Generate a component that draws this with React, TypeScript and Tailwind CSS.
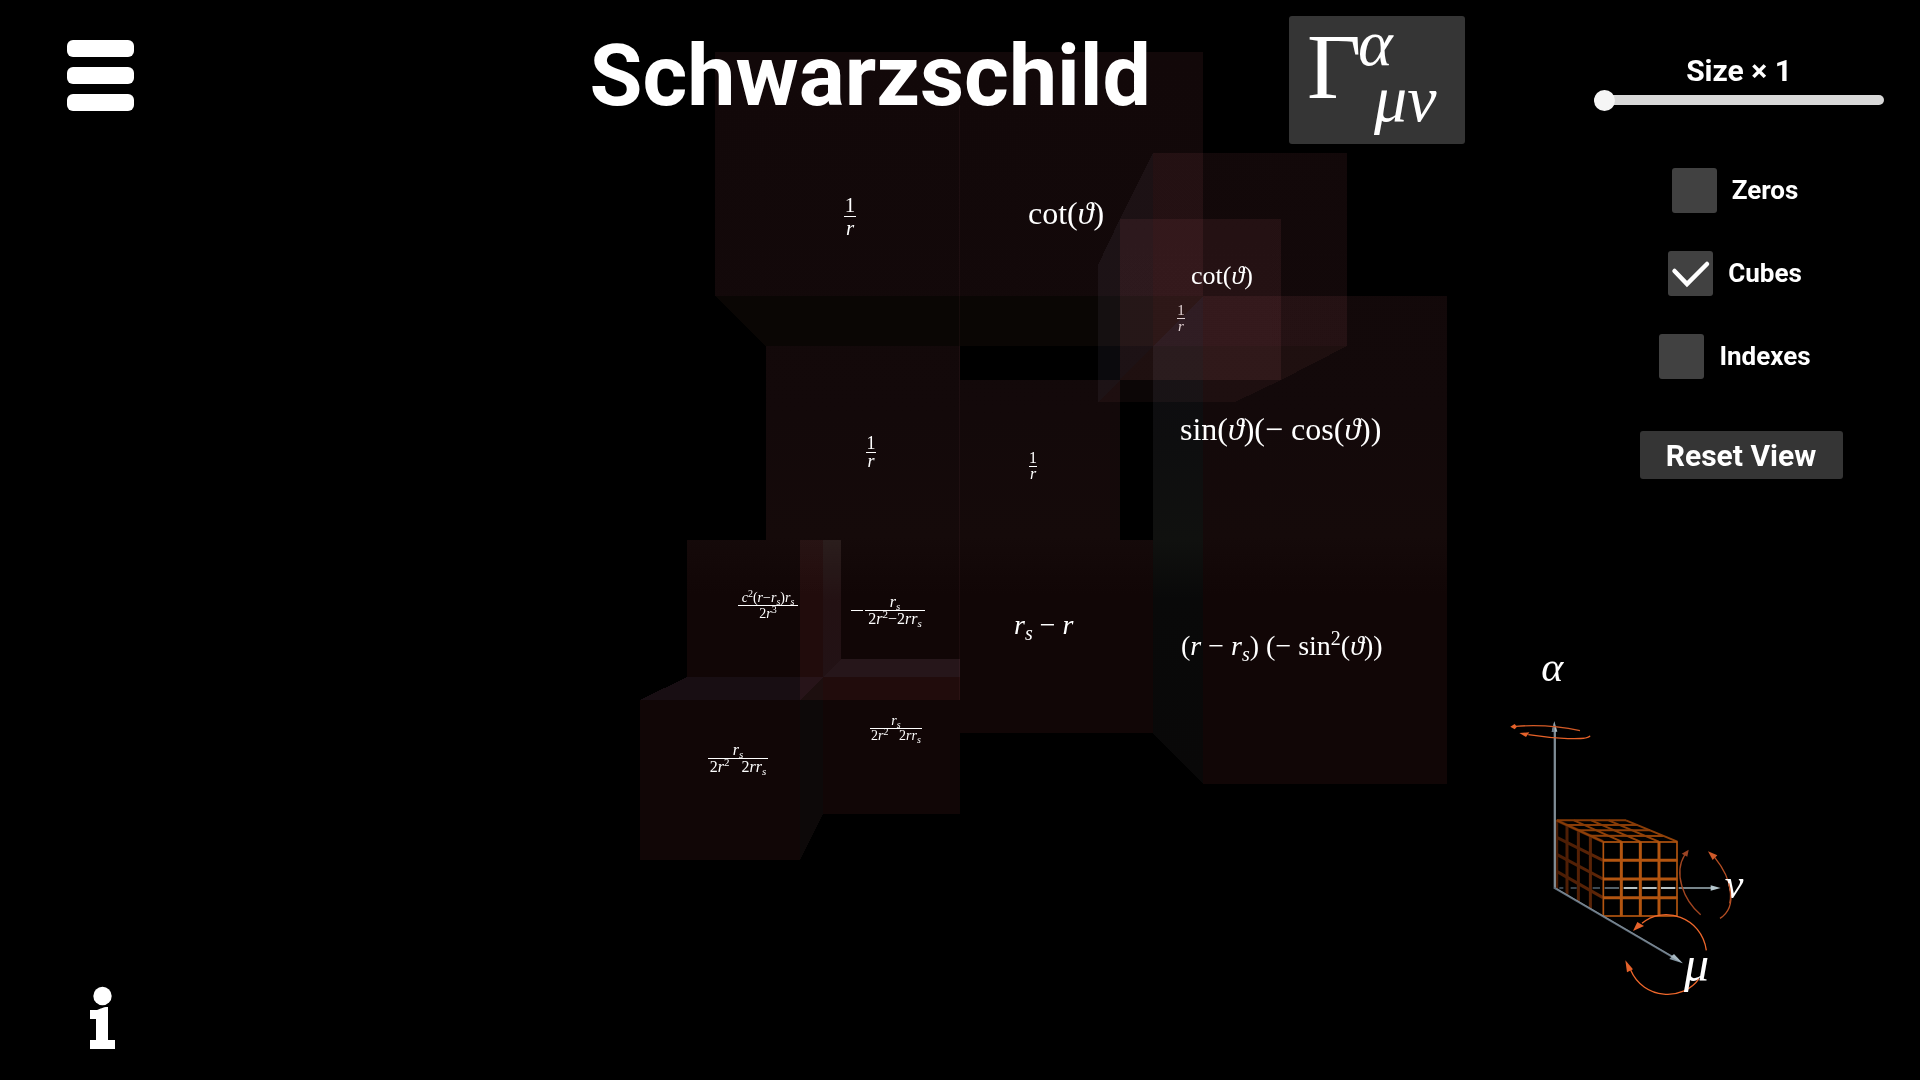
import { useState } from "react";
import type { ReactNode } from "react";

const SERIF = "font-[Liberation_Serif,DejaVu_Serif,serif]";

/* ---------- cube scene ---------- */

const LAYER_FACES = [
  "715,52 959,52 959,296 715,296",
  "959,52 1203,52 1203,296 959,296",
  "1203,296 1447,296 1447,540 1203,540",
  "1203,540 1447,540 1447,784 1203,784",
  "766,346 960,346 960,540 766,540",
  "1153,153 1347,153 1347,346 1153,346",
  "960,540 1153,540 1153,733 960,733",
  "1120,219 1281,219 1281,380 1120,380",
  "960,380 1120,380 1120,540 960,540",
  "800,540 960,540 960,700 800,700",
  "640,700 800,700 800,860 640,860",
  "687,540 823,540 823,677 687,677",
  "823,677 960,677 960,814 823,814",
];

const SHADED_FACES: { points: string; fill: string }[] = [
  { points: "715,296 1203,296 1153,346 766,346", fill: "#0a0604" },
  { points: "1203,296 1203,784 1153,733 1153,346", fill: "url(#wall)" },
  { points: "1153,153 1153,346 1120,380 1120,219", fill: "#0b090b" },
  { points: "1153,346 1347,346 1281,380 1120,380", fill: "#0d0706" },
  { points: "1120,219 1120,380 1098,402 1098,265", fill: "#0b0a0d" },
  { points: "1120,380 1281,380 1235,402 1098,402", fill: "#0c0606" },
  { points: "640,700 800,700 823,677 687,677", fill: "#180e13" },
  { points: "800,700 823,677 823,814 800,860", fill: "#0d0909" },
  { points: "823,677 960,677 960,659 841,659", fill: "#171014" },
  { points: "823,540 841,540 841,659 823,677", fill: "url(#inner)" },
];

function Sub({ children, size }: { children: string; size: number }) {
  return (
    <tspan baselineShift={-Math.round(size * 0.2)} fontSize={Math.round(size * 0.7)}>
      {children}
    </tspan>
  );
}

function Sup({ children, size }: { children: string; size: number }) {
  return (
    <tspan baselineShift={Math.round(size * 0.36)} fontSize={Math.round(size * 0.7)}>
      {children}
    </tspan>
  );
}

function It({ children }: { children: ReactNode }) {
  return <tspan fontStyle="italic">{children}</tspan>;
}

function Fraction(props: {
  x: number;
  y: number;
  half: number;
  size: number;
  up: number;
  down: number;
  top: ReactNode;
  bottom: ReactNode;
  color?: string;
}) {
  const { x, y, half, size, up, down, top, bottom, color = "#fff" } = props;
  return (
    <g fill={color} fontSize={size} textAnchor="middle">
      <text x={x} y={y - up}>{top}</text>
      <rect x={x - half} y={y} width={half * 2} height="1" />
      <text x={x} y={y + down}>{bottom}</text>
    </g>
  );
}

function Scene() {
  const rs = (size: number) => (
    <It>
      r<Sub size={size}>s</Sub>
    </It>
  );
  const oneOverR = { top: "1", bottom: <It>r</It> };
  return (
    <svg
      className={`absolute inset-0 h-full w-full ${SERIF}`}
      viewBox="0 0 1920 1080"
      role="img"
      aria-label="Christoffel symbol cubes"
    >
      <defs>
        <linearGradient id="face" gradientUnits="userSpaceOnUse" x1="0" y1="52" x2="0" y2="860">
          <stop offset="0" stopColor="#120809" />
          <stop offset="0.45" stopColor="#13090a" />
          <stop offset="0.6" stopColor="#150a0a" />
          <stop offset="0.67" stopColor="#110606" />
          <stop offset="1" stopColor="#110606" />
        </linearGradient>
        <linearGradient id="wall" gradientUnits="userSpaceOnUse" x1="0" y1="296" x2="0" y2="784">
          <stop offset="0" stopColor="#0d0c11" />
          <stop offset="0.3" stopColor="#0e0e0f" />
          <stop offset="0.5" stopColor="#10110f" />
          <stop offset="0.62" stopColor="#090909" />
          <stop offset="1" stopColor="#090808" />
        </linearGradient>
        <linearGradient id="inner" gradientUnits="userSpaceOnUse" x1="0" y1="540" x2="0" y2="677">
          <stop offset="0" stopColor="#181514" />
          <stop offset="0.45" stopColor="#130b0d" />
          <stop offset="1" stopColor="#120c0f" />
        </linearGradient>
      </defs>

      <g className="isolate" shapeRendering="crispEdges">
        {LAYER_FACES.map((points) => (
          <polygon key={points} points={points} fill="url(#face)" className="mix-blend-screen" />
        ))}
        {SHADED_FACES.map((f) => (
          <polygon key={f.points} points={f.points} fill={f.fill} className="mix-blend-screen" />
        ))}
        <rect x="959" y="105" width="1" height="595" fill="#0c0607" className="mix-blend-screen" />
      </g>

      <Fraction x={850} y={216} half={6} size={21} up={4} down={19} {...oneOverR} />
      <Fraction x={871} y={452} half={5} size={18} up={3} down={15} {...oneOverR} />
      <Fraction x={1033} y={466} half={4} size={16} up={3} down={13} {...oneOverR} />
      <Fraction x={1181} y={318} half={4} size={15} up={3} down={13} color="#e0d0d2" {...oneOverR} />

      <g fill="#fff">
        <text x="1028" y="224" fontSize="32">cot(<It>ϑ</It>)</text>
        <text x="1191" y="284" fontSize="26">cot(<It>ϑ</It>)</text>
        <text x="1180" y="440" fontSize="32">
          sin(<It>ϑ</It>)(− cos(<It>ϑ</It>))
        </text>
        <text x="1014" y="634" fontSize="28">
          {rs(28)} − <It>r</It>
        </text>
        <text x="1181" y="655" fontSize="28">
          (<It>r</It> − {rs(28)}) (− sin<Sup size={28}>2</Sup>(<It>ϑ</It>))
        </text>
      </g>

      <Fraction
        x={768} y={605} half={30} size={14} up={3} down={13}
        top={<><It>c</It><Sup size={14}>2</Sup>(<It>r</It>−{rs(14)}){rs(14)}</>}
        bottom={<>2<It>r</It><Sup size={14}>3</Sup></>}
      />
      <rect x="851" y="610" width="12" height="1" fill="#fff" />
      <Fraction
        x={895} y={610} half={30} size={16} up={3} down={14}
        top={rs(16)}
        bottom={<>2<It>r</It><Sup size={16}>2</Sup>−2<It>r</It>{rs(16)}</>}
      />
      <Fraction
        x={738} y={758} half={30} size={16} up={3} down={14}
        top={rs(16)}
        bottom={<>2<It>r</It><Sup size={16}>2</Sup>{"\u00a0\u00a0\u00a0"}2<It>r</It>{rs(16)}</>}
      />
      <Fraction
        x={896} y={728} half={26} size={14} up={3} down={12}
        top={rs(14)}
        bottom={<>2<It>r</It><Sup size={14}>2</Sup>{"\u00a0\u00a0\u00a0"}2<It>r</It>{rs(14)}</>}
      />
    </svg>
  );
}

/* ---------- axis gizmo ---------- */

const DEPTH = [0, 0.223, 0.468, 0.727, 1];
const QUARTERS = [0, 0.25, 0.5, 0.75, 1];
const mix = (a: number, b: number, t: number) => a + (b - a) * t;

const DASHES: [number, number, string][] = [
  [238, 250, "#46525c"],
  [272, 290, "#46525c"],
  [338, 360, "#4a5864"],
  [374, 417, "#66757f"],
  [431, 472, "#dce9ec"],
  [487, 530, "#dce9ec"],
  [543, 586, "#dce9ec"],
  [596, 700, "#9fb0b8"],
];

function Gizmo() {
  return (
    <svg
      className={`h-[370px] w-[250px] ${SERIF}`}
      viewBox="60 0 750 1110"
      role="img"
      aria-label="Axes alpha, mu and nu"
    >
      <defs>
        <linearGradient id="side" gradientUnits="userSpaceOnUse" x1="228" y1="0" x2="369" y2="0">
          <stop offset="0" stopColor="#4a1c04" />
          <stop offset="1" stopColor="#602607" />
        </linearGradient>
        <linearGradient id="lid" gradientUnits="userSpaceOnUse" x1="0" y1="541" x2="0" y2="605">
          <stop offset="0" stopColor="#843906" />
          <stop offset="1" stopColor="#964409" />
        </linearGradient>
      </defs>

      <g stroke="url(#side)" strokeWidth="9" fill="none">
        {DEPTH.slice(0, 4).map((t) => (
          <path key={`v${t}`} d={`M${mix(230, 369, t)} ${mix(541, 605, t)}L${mix(230, 369, t) + 0.1} ${mix(747, 829, t)}`} />
        ))}
        {QUARTERS.slice(0, 4).map((t) => (
          <path key={`h${t}`} d={`M230 ${mix(541, 745, t)}L369 ${mix(605, 829, t)}`} />
        ))}
      </g>
      <g stroke="url(#lid)" strokeWidth="6" fill="none">
        {DEPTH.slice(0, 4).map((t) => (
          <path key={`h${t}`} d={`M${mix(230, 369, t)} ${mix(541, 605, t)}L${mix(438, 592, t)} ${mix(541, 605, t) + 0.1}`} />
        ))}
        {QUARTERS.map((t) => (
          <path key={`d${t}`} d={`M${mix(230, 438, t)} 541L${mix(369, 592, t)} 605`} />
        ))}
      </g>
      <g stroke="#b35510" strokeWidth="9" fill="none">
        <rect x="370" y="606" width="221" height="222" strokeWidth="5" />
        {[424, 481, 537].map((x) => (
          <path key={x} d={`M${x} 605V829`} />
        ))}
        {[661, 717, 773].map((y) => (
          <path key={y} d={`M369 ${y}H592`} />
        ))}
      </g>

      <path d="M224 745V270" stroke="#7b8994" strokeWidth="6" />
      <path d="M226 745V270" stroke="#9aa9b1" strokeWidth="2" />
      <path d="M223 244L232 275H215Z" fill="#a9b9c0" />
      <path d="M223 244L224 275H215Z" fill="#6d7c88" />
      <path d="M222 743L580 952" stroke="#64727f" strokeWidth="6" />
      <path d="M230 746L580 951" stroke="#8c9aa5" strokeWidth="2" />
      <path d="M608 970L568 957L582 943Z" fill="#8496a3" />
      <path d="M608 970L572 950L582 943Z" fill="#a8b8c2" />
      {DASHES.map(([a, b, c]) => (
        <path key={a} d={`M${a} 744H${b}`} stroke={c} strokeWidth="5" />
      ))}
      <path d="M722 744L692 736V752Z" fill="#b5c7cd" />

      <g fill="none" strokeWidth="4">
        <path d="M108 259C170 254 240 259 300 272" stroke="#d35a26" />
        <path d="M145 284C220 296 325 302 330 287" stroke="#e86228" />
        <path d="M662 824C610 780 580 700 614 645" stroke="#a24520" />
        <path d="M704 652C755 715 775 800 720 835" stroke="#b54e23" />
        <path d="M679 931C665 830 550 795 486 850" stroke="#ee672b" />
        <path d="M452 990C490 1080 610 1085 657 1016" stroke="#ee672b" />
      </g>
      <g fill="#e5622b">
        <path d="M91 260L104 252L111 260L104 268Z" />
        <path d="M118 279L148 277L138 291Z" />
        <path d="M459 873L472 846L492 858Z" />
        <path d="M436 961L459 988L441 997Z" />
      </g>
      <path d="M626 629L622 650L605 641Z" fill="#9c4424" />
      <path d="M684 634L712 646L698 660Z" fill="#cf5a2a" />

      <g fill="#fff" fontStyle="italic" fontSize="126">
        <text x="184" y="122">α</text>
        <text x="734" y="774">ν</text>
        <text x="612" y="1024" fontSize="150">μ</text>
      </g>
      <path d="M746 730C753 755 753 775 749 790" stroke="#b54e23" strokeWidth="4" fill="none" />
    </svg>
  );
}

/* ---------- controls ---------- */

function Toggle({ label, initial = false }: { label: string; initial?: boolean }) {
  const [on, setOn] = useState(initial);
  return (
    <label className="flex items-center gap-[15px] text-[26px] leading-[46px] font-bold">
      <span className="relative size-[45px]">
        <input
          type="checkbox"
          checked={on}
          onChange={(e) => setOn(e.target.checked)}
          className="block size-[45px] appearance-none rounded-[3px] bg-[#414141]"
        />
        {on && (
          <svg className="pointer-events-none absolute inset-0 size-full" viewBox="0 0 45 45" aria-hidden="true">
            <path
              d="M6.500 20L19 33L39 13"
              fill="none"
              stroke="#fff"
              strokeWidth="4.500"
              strokeLinecap="round"
            />
          </svg>
        )}
      </span>
      {label}
    </label>
  );
}

export default function App() {
  const [size, setSize] = useState(1);
  return (
    <main className="relative flex min-h-screen overflow-hidden bg-black font-[Roboto,sans-serif] text-white">
      <Scene />

      <nav className="relative flex w-[200px] shrink-0 flex-col items-start justify-between pt-10 pb-[30px] pl-[67px]">
        <button type="button" aria-label="Menu" className="flex w-[67px] flex-col gap-[10px]">
          <span className="h-[17px] w-full rounded-[6px] bg-white" />
          <span className="h-[17px] w-full rounded-[6px] bg-white" />
          <span className="h-[17px] w-full rounded-[6px] bg-white" />
        </button>
        <button type="button" aria-label="Information" className="ml-[22px]">
          <svg width="28" height="64" viewBox="0 0 28 64" className="block" aria-hidden="true">
            <circle cx="13.500" cy="10" r="9.200" fill="#fff" />
            <path
              fill="#fff"
              d="M1 24H8C12 23 13 21 19 21V54H26V63H1V54H7V33H1Z"
            />
          </svg>
        </button>
      </nav>

      <header className="relative flex flex-1 items-start justify-end gap-[138px] pt-4">
        <h1 className="text-[86px] leading-[120px] font-bold whitespace-nowrap">Schwarzschild</h1>
        <button
          type="button"
          aria-label="Christoffel symbol"
          className="h-[128px] w-[176px] rounded-[3px] bg-[#353535]"
        >
          <svg viewBox="0 0 176 128" className={`block size-full overflow-visible ${SERIF}`} fill="#fff">
            <text x="18" y="82" fontSize="94">
              Γ
              <tspan x="69" y="49" fontSize="66" fontStyle="italic">α</tspan>
              <tspan x="85" y="105" fontSize="66" fontStyle="italic">μν</tspan>
            </text>
          </svg>
        </button>
      </header>

      <aside className="relative flex w-[455px] shrink-0 flex-col justify-between pt-[53px] pb-[70px]">
        <div className="mr-9 flex w-[290px] flex-col items-center self-end">
          <label htmlFor="size" className="text-[30px] leading-9 font-bold">
            Size × {size}
          </label>
          <input
            id="size"
            type="range"
            min={1}
            max={10}
            value={size}
            onChange={(e) => setSize(Number(e.target.value))}
            className="mt-[6px] h-[10px] w-full appearance-none rounded-full bg-[#d8d8d8] [&::-webkit-slider-thumb]:size-[21px] [&::-webkit-slider-thumb]:appearance-none [&::-webkit-slider-thumb]:rounded-full [&::-webkit-slider-thumb]:bg-[#f5f5f5]"
          />
          <div className="mt-[62px] mr-2 flex flex-col items-center gap-[37px]">
            <Toggle label="Zeros" />
            <Toggle label="Cubes" initial />
            <Toggle label="Indexes" />
          </div>
          <button
            type="button"
            className="mt-[52px] ml-1 h-12 w-[203px] rounded-[3px] bg-[#353535] text-[30px] leading-[49px] font-bold"
          >
            Reset View
          </button>
        </div>
        <div className="ml-[35px]">
          <Gizmo />
        </div>
      </aside>
    </main>
  );
}
